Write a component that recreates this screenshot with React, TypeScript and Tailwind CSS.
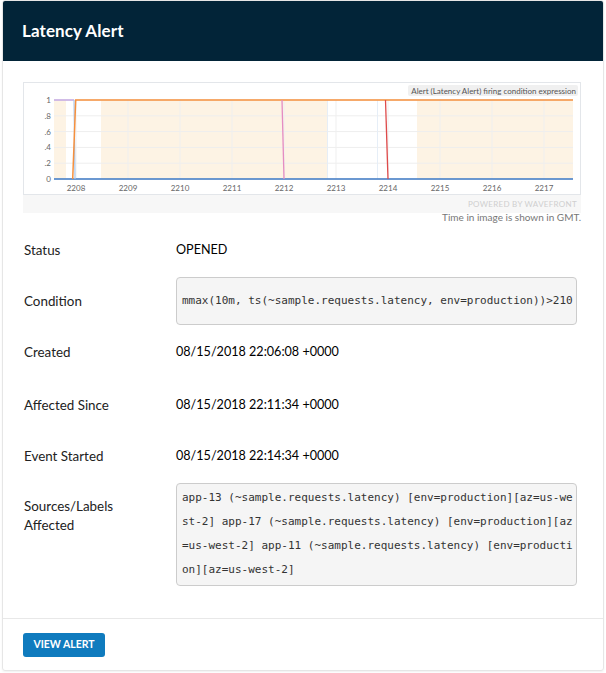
const FONT = { fontFamily: 'Lato, "Open Sans", sans-serif' }

const X_LABELS = ['2208', '2209', '2210', '2211', '2212', '2213', '2214', '2215', '2216', '2217']
const Y_LABELS = ['1', '.8', '.6', '.4', '.2', '0']

function Chart() {
  // plot area inside the box: x 30..549, y 17..96
  const ys = [17, 32.8, 48.6, 64.4, 80.2, 96]
  return (
    <svg width="556" height="111" viewBox="0 0 556 111" className="block">
      {/* shaded firing ranges */}
      <rect x="30" y="17" width="12" height="79" fill="#fdf3e4" />
      <rect x="77" y="17" width="226" height="79" fill="#fdf3e4" />
      <rect x="393" y="17" width="156" height="79" fill="#fdf3e4" />

      {/* grid */}
      {ys.map((y) => (
        <line key={y} x1="30" x2="549" y1={y} y2={y} stroke="#eeeeee" strokeWidth="1" />
      ))}
      {X_LABELS.map((_, i) => (
        <line key={i} x1={52 + i * 52} x2={52 + i * 52} y1="17" y2="96" stroke="#efefef" strokeWidth="1" />
      ))}
      <line x1="303.5" x2="303.5" y1="17" y2="96" stroke="#e6eef7" />
      <line x1="353.5" x2="353.5" y1="17" y2="96" stroke="#e6eef7" />

      {/* axis labels */}
      {Y_LABELS.map((t, i) => (
        <text key={t} x="27" y={ys[i] + 3} textAnchor="end" fontSize="8" fill="#666" fontFamily="Lato, sans-serif">
          {t}
        </text>
      ))}
      {X_LABELS.map((t, i) => (
        <text key={t} x={52 + i * 52} y="108" textAnchor="middle" fontSize="8" fill="#666" fontFamily="Lato, sans-serif">
          {t}
        </text>
      ))}

      {/* series */}
      <line x1="30" x2="549" y1="96" y2="96" stroke="#3d78c4" strokeWidth="1.5" />
      <line x1="30" x2="50" y1="17" y2="17" stroke="#c5a8e2" strokeWidth="1.5" />
      <line x1="50" x2="51" y1="17" y2="96" stroke="#a9c8ee" strokeWidth="1.2" />
      <polyline points="48.7,96 51.7,17 549,17" fill="none" stroke="#f6903d" strokeWidth="1.5" />
      <line x1="258" x2="260" y1="17" y2="96" stroke="#e58cc2" strokeWidth="1.3" />
      <line x1="361.5" x2="364" y1="17" y2="96" stroke="#de4a4a" strokeWidth="1.3" />

      {/* legend chip */}
      <rect x="384" y="2" width="170" height="11" rx="2" fill="#f0f0f0" />
      <text x="552" y="10.5" textAnchor="end" fontSize="8" fill="#555" fontFamily="Lato, sans-serif">
        Alert (Latency Alert) firing condition expression
      </text>
    </svg>
  )
}

function Row({ label, children, className = '' }: { label: React.ReactNode; children: React.ReactNode; className?: string }) {
  return (
    <div className={`flex items-center h-[24px] ${className}`}>
      <div className="w-[152px] shrink-0 text-[13.4px] text-[#222]">{label}</div>
      <div className="text-[12.6px] text-black">{children}</div>
    </div>
  )
}

const MONO = { fontFamily: '"DejaVu Sans Mono", "Liberation Mono", monospace' }

export default function App() {
  return (
    <div className="w-[606px] min-h-[673px] bg-white px-[2px]" style={FONT}>
      <div className="border border-[#e6e6e6] rounded-[3px] shadow-[0_1px_2px_rgba(0,0,0,0.06)] overflow-hidden">
        <div className="h-[60px] bg-[#022438] flex items-center px-[19px]">
          <h1 className="text-[17px] font-bold text-white tracking-[0.1px]">Latency Alert</h1>
        </div>

        <div className="pl-[20px] pr-[21px] pt-[21px] pb-[32px]">
          <div>
            <div className="border border-[#e3e6ea] w-[558px]">
              <Chart />
            </div>
            <div className="h-[18px] w-[558px] bg-[#f7f7f7] flex items-center justify-end pr-[4px] text-[8px] text-[#cfcfcf] tracking-[0.3px]">
              POWERED BY WAVEFRONT
            </div>
            <div className="w-[558px] text-right text-[10px] leading-[10px] text-[#777] mt-[-1px]">
              Time in image is shown in GMT.
            </div>
          </div>

          <div className="pl-[1px]">
            <Row label="Status" className="mt-[16px]">OPENED</Row>

            <div className="flex items-center mt-[15px]">
              <div className="w-[152px] shrink-0 text-[13.4px] text-[#222]">Condition</div>
              <div
                className="w-[401px] border border-[#cccccc] rounded-[4px] bg-[#f5f5f5] pl-[5px] pr-[2px] py-[11px] text-[11px] leading-[24px] text-[#333] whitespace-nowrap overflow-hidden"
                style={MONO}
              >
                mmax(10m, ts(~sample.requests.latency, env=production))&gt;210
              </div>
            </div>

            <Row label="Created" className="mt-[15px]">08/15/2018 22:06:08 +0000</Row>
            <Row label="Affected Since" className="mt-[29px]">08/15/2018 22:11:34 +0000</Row>
            <Row label="Event Started" className="mt-[27px]">08/15/2018 22:14:34 +0000</Row>

            <div className="flex items-start mt-[15px]">
              <div className="w-[152px] shrink-0 text-[13.4px] leading-[19px] text-[#222] pt-[14px]">
                Sources/Labels
                <br />
                Affected
              </div>
              <div
                className="w-[401px] border border-[#cccccc] rounded-[4px] bg-[#f5f5f5] pl-[5px] pr-[2px] pt-[2px] pb-[3px] text-[11px] leading-[24px] text-[#333] break-all"
                style={MONO}
              >
                app-13 (~sample.requests.latency) [env=production][az=us-west-2] app-17 (~sample.requests.latency) [env=production][az=us-west-2] app-11 (~sample.requests.latency) [env=production][az=us-west-2]
              </div>
            </div>
          </div>
        </div>

        <div className="border-t border-[#e8e8e8] pl-[20px] pt-[11px] pb-[13px]">
          <button className="w-[82px] h-[24px] rounded-[3px] bg-[#0f7bbe] text-white text-[10.5px] font-bold tracking-[0px]">
            VIEW ALERT
          </button>
        </div>
      </div>
    </div>
  )
}
